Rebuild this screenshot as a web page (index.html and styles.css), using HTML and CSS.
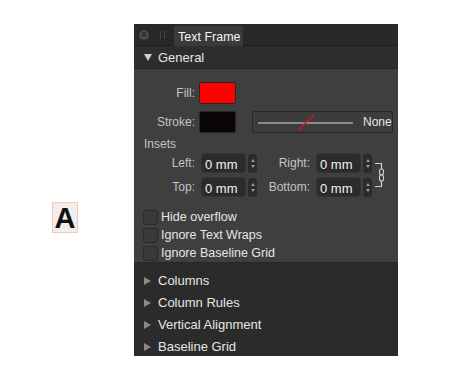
FILE: index.html
```html
<!DOCTYPE html>
<html lang="en">
<head>
    <meta charset="UTF-8">
    <title>Text Frame</title>
    <link rel="stylesheet" href="styles.css">
</head>
<body>
    <div class="stage">
        <div class="frame-icon">A</div>

        <div class="panel">
            <div class="tabbar">
                <span class="close-btn">&times;</span>
                <span class="grip"></span>
                <span class="tab">Text Frame</span>
            </div>

            <div class="section-head open">
                <span class="tri-down"></span>General
            </div>

            <div class="general">
                <div class="color-row">
                    <span class="label">Fill:</span>
                    <span class="swatch fill"></span>
                </div>
                <div class="color-row">
                    <span class="label">Stroke:</span>
                    <span class="swatch stroke"></span>
                    <div class="stroke-style">
                        <svg width="100" height="20" viewBox="0 0 100 20">
                            <line x1="5" y1="11" x2="100" y2="11" stroke="#8a8a8a" stroke-width="2"/>
                            <line x1="45" y1="18" x2="61" y2="3" stroke="#d8161c" stroke-width="1.6"/>
                        </svg>
                        <span>None</span>
                    </div>
                </div>

                <div class="insets-title">Insets</div>
                <div class="insets">
                    <div class="inset-grid">
                        <span class="label">Left:</span>
                        <span class="field">0 mm</span>
                        <span class="spin"><i class="up"></i><i class="down"></i></span>
                        <span class="label">Right:</span>
                        <span class="field">0 mm</span>
                        <span class="spin"><i class="up"></i><i class="down"></i></span>

                        <span class="label">Top:</span>
                        <span class="field">0 mm</span>
                        <span class="spin"><i class="up"></i><i class="down"></i></span>
                        <span class="label">Bottom:</span>
                        <span class="field">0 mm</span>
                        <span class="spin"><i class="up"></i><i class="down"></i></span>
                    </div>
                    <svg class="chain" width="10" height="26" viewBox="0 0 10 26">
                        <path d="M1 1.5 H7.5 V24.5 H1" fill="none" stroke="#cfcfcf" stroke-width="1.2"/>
                        <rect x="5.5" y="7" width="4" height="6" rx="2" fill="#3f3f3f" stroke="#cfcfcf" stroke-width="1.1"/>
                        <rect x="5.5" y="13" width="4" height="6" rx="2" fill="#3f3f3f" stroke="#cfcfcf" stroke-width="1.1"/>
                    </svg>
                </div>

                <div class="checks">
                    <label class="check"><span class="box"></span>Hide overflow</label>
                    <label class="check"><span class="box"></span>Ignore Text Wraps</label>
                    <label class="check"><span class="box"></span>Ignore Baseline Grid</label>
                </div>
            </div>

            <div class="closed-list">
                <div class="section-head"><span class="tri-right"></span>Columns</div>
                <div class="section-head"><span class="tri-right"></span>Column Rules</div>
                <div class="section-head"><span class="tri-right"></span>Vertical Alignment</div>
                <div class="section-head"><span class="tri-right"></span>Baseline Grid</div>
            </div>
        </div>
    </div>
</body>
</html>
```

FILE: styles.css
```css
body {
    margin: 0;
    background: #ffffff;
    font-family: "Liberation Sans", Arial, sans-serif;
    font-size: 12px;
}

.stage {
    display: flex;
    align-items: flex-start;
    padding: 24px 0 0 52px;
}

.frame-icon {
    width: 24px;
    height: 29px;
    margin-top: 178px;
    margin-right: 56px;
    background: #f1eeec;
    border: 1px solid #f3c9bd;
    font-size: 29px;
    font-weight: bold;
    line-height: 31px;
    text-align: center;
    color: #111;
}

.panel {
    width: 264px;
    height: 332px;
    background: #2b2b2b;
    color: #e4e4e4;
    display: flex;
    flex-direction: column;
}

/* top tab strip */
.tabbar {
    height: 21px;
    background: #282828;
    border-bottom: 1px solid #1d1d1d;
    display: flex;
    align-items: flex-start;
}

.close-btn {
    width: 10px;
    height: 10px;
    margin: 6px 0 0 5px;
    border-radius: 50%;
    background: #4b4b4b;
    color: #282828;
    font-size: 10px;
    line-height: 10px;
    text-align: center;
    font-weight: bold;
}

.grip {
    width: 3px;
    height: 8px;
    margin: 7px 0 0 11px;
    border-left: 1px solid #444;
    border-right: 1px solid #444;
}

.tab {
    margin: 2px 0 0 9px;
    padding-left: 4px;
    width: 69px;
    height: 20px;
    box-sizing: border-box;
    white-space: nowrap;
    background: #3a3a3a;
    color: #f4f4f4;
    font-size: 12.5px;
    line-height: 23px;
}

/* collapsible headers */
.section-head {
    height: 22px;
    line-height: 22px;
    padding-left: 10px;
    display: flex;
    align-items: center;
    color: #e6e6e6;
    font-size: 13px;
}

.section-head.open {
    background: #2d2d2d;
    border-bottom: 1px solid #262626;
    height: 21px;
    padding-top: 1px;
}

.tri-down {
    width: 0;
    height: 0;
    border-left: 4px solid transparent;
    border-right: 4px solid transparent;
    border-top: 7px solid #cfcfcf;
    margin-right: 6px;
}

.tri-right {
    width: 0;
    height: 0;
    border-top: 4px solid transparent;
    border-bottom: 4px solid transparent;
    border-left: 7px solid #8a8a8a;
    margin-right: 7px;
}

/* general section */
.general {
    background: #3f3f3f;
    height: 197px;
    border-bottom: 1px solid #262626;
    padding-top: 13px;
    box-sizing: border-box;
}

.label {
    color: #c4c4c4;
    text-align: right;
    font-size: 12px;
}

.color-row {
    display: flex;
    align-items: center;
    height: 22px;
    margin-bottom: 7px;
}

.color-row .label {
    width: 61px;
    margin-right: 4px;
}

.swatch {
    width: 35px;
    height: 20px;
    border: 1px solid #262626;
    border-radius: 2px;
}

.swatch.fill {
    background: #ff0000;
}

.swatch.stroke {
    background: #0a0605;
}

.stroke-style {
    margin-left: 16px;
    width: 139px;
    height: 20px;
    border: 1px solid #262626;
    border-radius: 3px;
    background: #3c3c3c;
    display: flex;
    align-items: center;
}

.stroke-style span {
    margin-left: 10px;
    color: #e6e6e6;
}

.insets-title {
    color: #c4c4c4;
    padding-left: 10px;
    margin-top: -3px;
    line-height: 14px;
}

.insets {
    display: flex;
    align-items: center;
    margin-top: 2px;
}

.inset-grid {
    display: grid;
    grid-template-columns: 67px 45px 11px 59px 45px 11px;
    grid-template-rows: 20px 20px;
    row-gap: 4px;
    align-items: center;
}

.inset-grid .label {
    padding-right: 6px;
}

.field {
    height: 20px;
    line-height: 21px;
    background: #2b2b2b;
    border: 1px solid #333;
    box-sizing: border-box;
    border-radius: 4px;
    padding-left: 3px;
    color: #f2f2f2;
    font-size: 13px;
}

.spin {
    margin-left: 2px;
    width: 9px;
    height: 19px;
    border-radius: 3px;
    background: #2b2b2b;
    display: flex;
    flex-direction: column;
    align-items: center;
    justify-content: center;
    gap: 3px;
}

.spin i {
    width: 0;
    height: 0;
    border-left: 2px solid transparent;
    border-right: 2px solid transparent;
}

.spin .up {
    border-bottom: 3px solid #9a9a9a;
}

.spin .down {
    border-top: 3px solid #9a9a9a;
}

.chain {
    margin-left: 2px;
}

.checks {
    margin-top: 11px;
    padding-left: 9px;
}

.check {
    display: flex;
    align-items: center;
    height: 18px;
    color: #e6e6e6;
    font-size: 12.5px;
}

.box {
    width: 13px;
    height: 13px;
    border: 1px solid #2a2a2a;
    border-radius: 3px;
    background: #3a3a3a;
    margin-right: 3px;
}

.closed-list {
    padding-top: 7px;
}
```
